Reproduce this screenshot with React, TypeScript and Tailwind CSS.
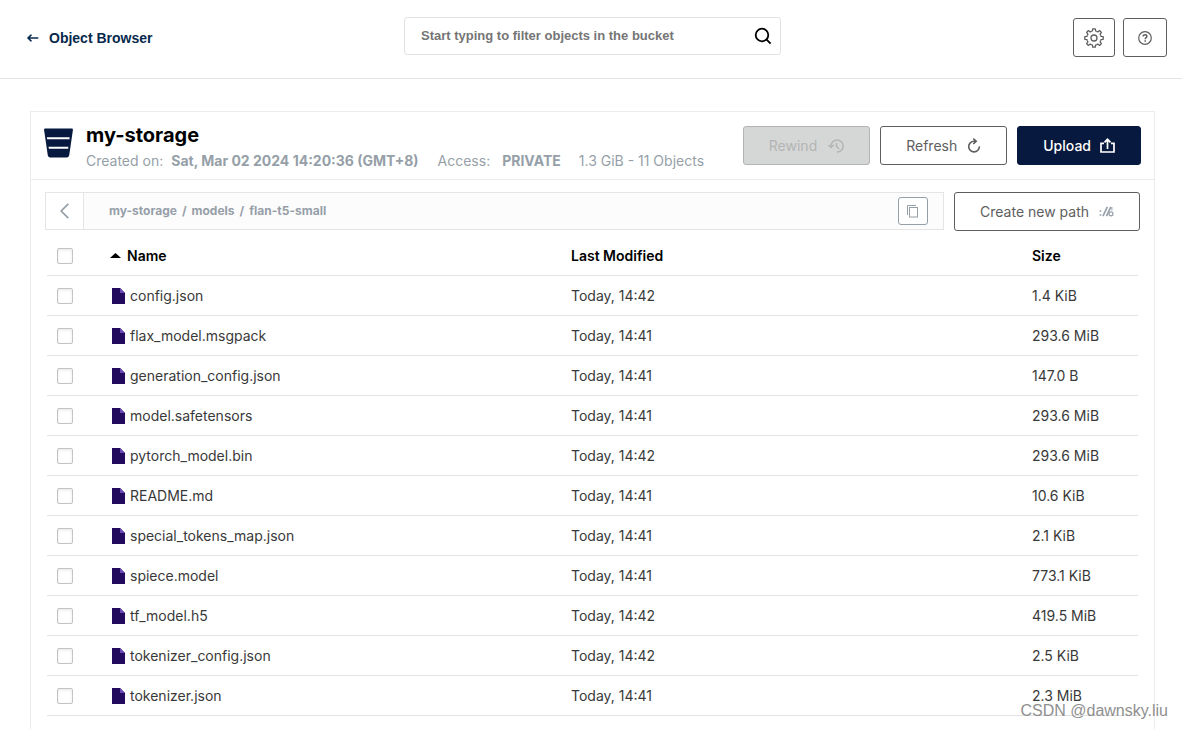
import React, { useState } from 'react';

interface BucketObject {
  name: string;
  modified: string;
  size: string;
}

const objects: BucketObject[] = [
  { name: 'config.json', modified: 'Today, 14:42', size: '1.4 KiB' },
  { name: 'flax_model.msgpack', modified: 'Today, 14:41', size: '293.6 MiB' },
  { name: 'generation_config.json', modified: 'Today, 14:41', size: '147.0 B' },
  { name: 'model.safetensors', modified: 'Today, 14:41', size: '293.6 MiB' },
  { name: 'pytorch_model.bin', modified: 'Today, 14:42', size: '293.6 MiB' },
  { name: 'README.md', modified: 'Today, 14:41', size: '10.6 KiB' },
  { name: 'special_tokens_map.json', modified: 'Today, 14:41', size: '2.1 KiB' },
  { name: 'spiece.model', modified: 'Today, 14:41', size: '773.1 KiB' },
  { name: 'tf_model.h5', modified: 'Today, 14:42', size: '419.5 MiB' },
  { name: 'tokenizer_config.json', modified: 'Today, 14:42', size: '2.5 KiB' },
  { name: 'tokenizer.json', modified: 'Today, 14:41', size: '2.3 MiB' },
];

const crumbs = ['my-storage', 'models', 'flan-t5-small'];

/* Icons */

const BackArrowIcon = () => (
  <svg width="12" height="8" viewBox="0 0 12 8" fill="none" stroke="currentColor" strokeWidth="1.6">
    <path d="M10.700 4H1.500M4 1.200L1 4l3 2.800" strokeLinecap="round" strokeLinejoin="round" />
  </svg>
);

const SearchIcon = () => (
  <svg width="18" height="18" viewBox="0 0 18 18" fill="none" stroke="currentColor" strokeWidth="1.8">
    <circle cx="8" cy="8" r="6.3" />
    <path d="M12.4 12.4L16.6 16.6" />
  </svg>
);

// Eight teeth, drawn from one tooth turned around the centre
const GearIcon = () => (
  <svg width="20" height="20" viewBox="0 0 20 20" fill="none" stroke="currentColor" strokeWidth="1.3" strokeLinejoin="round">
    {[0, 45, 90, 135, 180, 225, 270, 315].map((angle) => (
      <path key={angle} d="M7.200 3.400L8.400 3L8.700 0.800H11.300L11.600 3L12.800 3.400" transform={`rotate(${angle} 10 10)`} />
    ))}
    <circle cx="10" cy="10" r="3" />
  </svg>
);

const HelpIcon = () => (
  <svg width="14" height="14" viewBox="0 0 14 14" fill="none" stroke="currentColor">
    <circle cx="7" cy="7" r="6.3" strokeWidth="1.2" />
    <path d="M5.100 5.600c0-1.200.8-1.900 1.900-1.900s1.900.7 1.900 1.700c0 1.200-1.700 1.300-1.700 2.500v.4" strokeWidth="1.4" />
    <path d="M7.200 9.300v1.500" strokeWidth="1.500" />
  </svg>
);

const BucketIcon = () => (
  <svg className="self-start mt-4" width="29" height="30" viewBox="0 0 30 30">
    <path d="M1.500 0h27c1 0 1.600.7 1.400 1.600l-3.800 26.200c-.2 1.300-1.100 2.200-2.400 2.200H6.300c-1.300 0-2.200-.9-2.400-2.200L.1 1.600C-.1.700.5 0 1.500 0z" fill="#07193e" />
    <path d="M3 9h23.400v2H3.300zM4.700 19h20.400v2H5z" fill="#fff" />
  </svg>
);

const RewindIcon = () => (
  <svg width="16" height="14" viewBox="0 0 16 14" fill="none" stroke="currentColor" strokeWidth="1.500">
    <path d="M3 7.500C3 3.600 5.600 0.900 9 0.900s6.200 2.700 6.200 6.100S12.500 13.100 9 13.100" />
    <path d="M0.500 5.900L3 8.500l2.800-2.600" />
    <path d="M8.500 4v3.500l2.800 2.500" />
  </svg>
);

const RefreshIcon = () => (
  <svg width="14" height="15" viewBox="0 0 14 15" fill="none" stroke="currentColor" strokeWidth="1.600">
    <path d="M9 3.300H7A5.300 5.300 0 1 0 12.300 8.400" />
    <path d="M6.300 0.600L9.200 3.300L6.300 6" />
  </svg>
);

const UploadIcon = () => (
  <svg width="15" height="15" viewBox="0 0 15 15" fill="none" stroke="currentColor" strokeWidth="1.700">
    <path d="M4 5.300H1v8.700h13V5.300h-3" />
    <path d="M7.500 11V1.500M4.500 4.300l3-3 3 3" />
  </svg>
);

const CopyIcon = () => (
  <svg width="12" height="13" viewBox="0 0 12 13" fill="none" stroke="currentColor">
    <path d="M0.500 10V0.500H9" />
    <rect x="2.500" y="2.500" width="8" height="9.500" />
  </svg>
);

const NewPathIcon = () => (
  <svg width="15" height="11" viewBox="0 0 15 11" fill="none" stroke="#969fa8">
    <path d="M0.600 5h1.700M0.600 9h1.700" strokeWidth="1.700" />
    <path d="M4 10.200L8.300 0.800M7.500 10.200L11.800 0.800" strokeWidth="1.600" />
    <path d="M12.900 1v3.500" />
    <circle cx="12" cy="7.800" r="2" strokeWidth="1.200" />
  </svg>
);

const FileIcon = () => (
  <svg className="shrink-0" width="13" height="16" viewBox="0 0 13 16">
    <path d="M0 0h8l5 5v11H0z" fill="#220a5e" />
    <path d="M8 0l5 5H8z" fill="#6a4bb5" />
  </svg>
);

const Checkbox: React.FC<{ label: string; checked: boolean; onChange: () => void }> = ({ label, checked, onChange }) => (
  <input
    type="checkbox"
    aria-label={label}
    checked={checked}
    onChange={onChange}
    className="block w-4 h-4 appearance-none rounded-xs border border-[#c3c3c3] bg-white shadow-[inset_0_1px_3px_rgba(0,0,0,0.1)] checked:bg-[#07193e]"
  />
);

export default function App() {
  const [filter, setFilter] = useState('');
  const [selected, setSelected] = useState<string[]>([]);

  const visible = objects.filter((o) => o.name.includes(filter));
  const allSelected = selected.length === objects.length;

  const toggle = (name: string) => {
    setSelected(selected.includes(name) ? selected.filter((n) => n !== name) : [...selected, name]);
  };

  const outlineButton = 'flex items-center h-[39px] rounded-[3px] border border-[#5e5e5e] bg-white text-[#5e5e5e]';

  return (
    <div className="relative flex flex-col min-h-screen bg-white text-sm text-black font-['Inter',sans-serif]">
      {/* Top bar */}
      <header className="grid grid-cols-[1fr_377px_1fr] items-start h-[79px] pt-[17px] pl-[18px] pr-[15px] border-b border-[#e5e5e5]">
        <a
          href="#browser"
          className="flex items-center gap-[10px] h-[42px] pl-[9px] font-bold text-[#07294d] font-['Liberation_Sans',Arial,sans-serif]"
        >
          <BackArrowIcon />
          Object Browser
        </a>

        <div className="flex items-center h-[38px] pl-4 pr-2 rounded-[3px] border border-[#e2e2e2]">
          <input
            type="text"
            aria-label="Filter objects"
            placeholder="Start typing to filter objects in the bucket"
            value={filter}
            onChange={(e) => setFilter(e.target.value)}
            className="flex-1 min-w-0 font-bold text-[13px] outline-none placeholder:text-[#757575] font-['Liberation_Sans',Arial,sans-serif]"
          />
          <SearchIcon />
        </div>

        <div className="flex justify-end gap-2 pt-px">
          <button aria-label="Settings" className={`${outlineButton} w-[42px] justify-center`}>
            <GearIcon />
          </button>
          <button aria-label="Help" className={`${outlineButton} w-[44px] justify-center`}>
            <HelpIcon />
          </button>
        </div>
      </header>

      <main className="flex flex-1 flex-col pt-8 pl-[30px] pr-[27px]">
        <section className="flex-1 border border-b-0 border-[#eaedee]">
          {/* Bucket summary */}
          <div className="flex items-center h-[68px] px-[13px] border-b border-[#eaedee]">
            <BucketIcon />
            <div className="flex-1 pt-[2px] pl-[13px]">
              <h1 className="text-xl leading-6 font-bold">my-storage</h1>
              <p className="flex items-center leading-5 pt-1 text-[#969fa8] whitespace-nowrap">
                Created on: <strong className="pl-2 pr-[19px]">Sat, Mar 02 2024 14:20:36 (GMT+8)</strong>
                Access: <strong className="pl-3 pr-[18px]">PRIVATE</strong>
                1.3 GiB - 11 Objects
              </p>
            </div>
            <div className="flex gap-[10px]">
              <button
                disabled
                className="flex items-center gap-[11px] h-[39px] px-[25px] rounded-[3px] border border-[#b4b4b4] bg-[#d5d7d7] text-[#b4b4b4]"
              >
                Rewind
                <RewindIcon />
              </button>
              <button className={`${outlineButton} gap-[10px] px-[25px]`}>
                Refresh
                <RefreshIcon />
              </button>
              <button className="flex items-center gap-[9px] h-[39px] px-[25px] rounded-[3px] border border-[#07193e] bg-[#07193e] font-medium text-white">
                Upload
                <UploadIcon />
              </button>
            </div>
          </div>

          {/* Path */}
          <div className="flex gap-[10px] pt-3 px-[14px]">
            <nav aria-label="Path" className="flex flex-1 items-center h-[38px] border border-[#e5e5e5] bg-[#fcfcfd] text-[#969fa8]">
              <button aria-label="Back" className="flex items-center justify-center w-[38px] h-full border-r border-[#e5e5e5] bg-white">
                <svg width="9" height="16" viewBox="0 0 9 16" fill="none" stroke="currentColor" strokeWidth="1.700">
                  <path d="M8.300 0.800L1.200 8l7.100 7.200" />
                </svg>
              </button>
              <div className="flex flex-1 gap-[5px] pl-[25px] text-xs font-bold">
                {crumbs.map((crumb, i) => (
                  <React.Fragment key={crumb}>
                    {i > 0 && <span>/</span>}
                    <a href={`#${crumb}`}>{crumb}</a>
                  </React.Fragment>
                ))}
              </div>
              <button
                aria-label="Copy path"
                className="flex items-center justify-center w-[30px] h-7 mr-[15px] rounded-[3px] border border-[#969fa8] bg-white"
              >
                <CopyIcon />
              </button>
            </nav>
            <button className={`${outlineButton} gap-[10px] px-[25px]`}>
              Create new path
              <NewPathIcon />
            </button>
          </div>

          {/* Objects */}
          <div className="pt-[5px] px-4">
            <table className="w-full table-fixed border-separate border-spacing-0 text-left [&_td]:border-b [&_td]:border-[#e2e2e2] [&_th]:border-b [&_th]:border-[#e2e2e2]">
              <thead>
                <tr className="h-10">
                  <th className="w-[63px] pl-[10px]">
                    <Checkbox
                      label="Select all"
                      checked={allSelected}
                      onChange={() => setSelected(allSelected ? [] : objects.map((o) => o.name))}
                    />
                  </th>
                  <th className="font-semibold">
                    <div className="flex items-center gap-[6px]">
                      <svg width="11" height="5" viewBox="0 0 11 5">
                        <path d="M0 5L5.500 0L11 5z" />
                      </svg>
                      Name
                    </div>
                  </th>
                  <th className="font-semibold">Last Modified</th>
                  <th className="w-[106px] font-semibold">Size</th>
                </tr>
              </thead>
              <tbody className="text-[#393939]">
                {visible.map((o) => (
                  <tr key={o.name} className="h-10">
                    <td className="pl-[10px]">
                      <Checkbox label={`Select ${o.name}`} checked={selected.includes(o.name)} onChange={() => toggle(o.name)} />
                    </td>
                    <td>
                      <div className="flex items-center gap-[5px] pl-[2px]">
                        <FileIcon />
                        {o.name}
                      </div>
                    </td>
                    <td>{o.modified}</td>
                    <td>{o.size}</td>
                  </tr>
                ))}
              </tbody>
            </table>
          </div>
        </section>
      </main>

      <span className="absolute right-[14px] bottom-2 text-base leading-5 text-[#8f8f8f] font-['Liberation_Sans',Arial,sans-serif]">
        CSDN @dawnsky.liu
      </span>
    </div>
  );
}
